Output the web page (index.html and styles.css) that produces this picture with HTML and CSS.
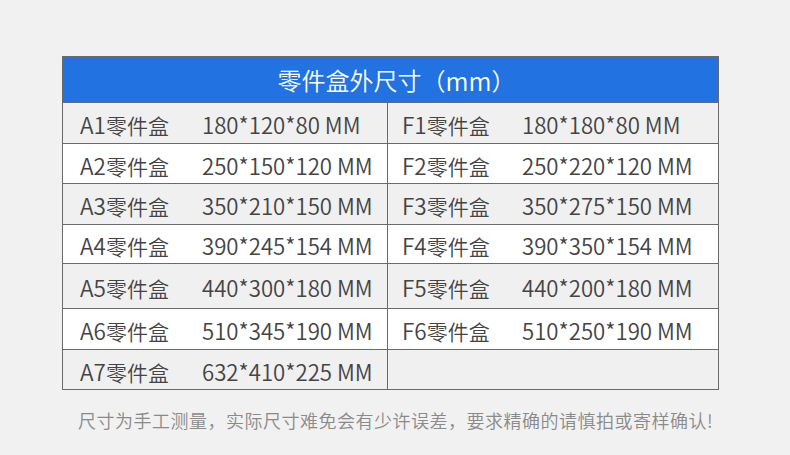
FILE: index.html
```html
<!DOCTYPE html>
<html lang="zh">
<head>
<meta charset="utf-8">
<link rel="stylesheet" href="styles.css">
</head>
<body>
<div class="page">
  <div class="sheet">
    <div class="head">零件盒外尺寸（<span class="lat">mm</span>）</div>
    <div class="row">
      <div class="cell left"><span class="name"><span class="lat">A1</span>零件盒</span><span class="size">180*120*80 MM</span></div>
      <div class="cell right"><span class="name"><span class="lat">F1</span>零件盒</span><span class="size">180*180*80 MM</span></div>
    </div>
    <div class="row">
      <div class="cell left"><span class="name"><span class="lat">A2</span>零件盒</span><span class="size">250*150*120 MM</span></div>
      <div class="cell right"><span class="name"><span class="lat">F2</span>零件盒</span><span class="size">250*220*120 MM</span></div>
    </div>
    <div class="row">
      <div class="cell left"><span class="name"><span class="lat">A3</span>零件盒</span><span class="size">350*210*150 MM</span></div>
      <div class="cell right"><span class="name"><span class="lat">F3</span>零件盒</span><span class="size">350*275*150 MM</span></div>
    </div>
    <div class="row">
      <div class="cell left"><span class="name"><span class="lat">A4</span>零件盒</span><span class="size">390*245*154 MM</span></div>
      <div class="cell right"><span class="name"><span class="lat">F4</span>零件盒</span><span class="size">390*350*154 MM</span></div>
    </div>
    <div class="row">
      <div class="cell left"><span class="name"><span class="lat">A5</span>零件盒</span><span class="size">440*300*180 MM</span></div>
      <div class="cell right"><span class="name"><span class="lat">F5</span>零件盒</span><span class="size">440*200*180 MM</span></div>
    </div>
    <div class="row">
      <div class="cell left"><span class="name"><span class="lat">A6</span>零件盒</span><span class="size">510*345*190 MM</span></div>
      <div class="cell right"><span class="name"><span class="lat">F6</span>零件盒</span><span class="size">510*250*190 MM</span></div>
    </div>
    <div class="row">
      <div class="cell left"><span class="name"><span class="lat">A7</span>零件盒</span><span class="size">632*410*225 MM</span></div>
      <div class="cell right"></div>
    </div>
  </div>
  <p class="note">尺寸为手工测量，实际尺寸难免会有少许误差，要求精确的请慎拍或寄样确认!</p>
</div>
</body>
</html>
```
FILE: styles.css
```css
html, body {
  margin: 0;
  padding: 0;
  background: #f1f1f1;
}
body {
  font-family: "Noto Sans CJK SC", "Noto Sans", sans-serif;
  font-weight: 350;
  width: 790px;
  height: 455px;
  overflow: hidden;
}
.page {
  padding: 56px 0 0 62px;
}
.sheet {
  width: 655px;
  border: 1px solid #6a6a6a;
}
.head {
  height: 45px;
  background: #2273e1;
  color: #fff;
  font-size: 24px;
  display: flex;
  align-items: center;
  justify-content: center;
  border-bottom: 1px solid #6a6a6a;
  padding-left: 12px;
}
.head .lat { font-size: 25px; }
.row {
  display: grid;
  grid-template-columns: 325px 330px;
  height: 40px;
  border-bottom: 1px solid #6a6a6a;
  background: #f0f0f0;
  color: #444;
  font-size: 21px;
}
.row:last-child { border-bottom: none; height: 39px; }
.row:nth-child(3) { height: 39px; background: #fff; }
.row:nth-child(5) { height: 38px; background: #fff; }
.row:nth-child(6) { height: 44px; }
.row:nth-child(7) { background: #fff; }
.cell {
  display: flex;
  align-items: center;
  padding-top: 2px;
  box-sizing: border-box;
}
.left {
  padding-left: 17px;
  border-right: 1px solid #6a6a6a;
}
.right {
  padding-left: 14px;
}
.name {
  display: inline-block;
  width: 122px;
  flex: none;
  white-space: nowrap;
}
.name .lat { font-size: 22.5px; }
.right .name { width: 120px; }
.size {
  white-space: nowrap;
  font-size: 22.2px;
}
.note {
  margin: 17px 0 0 16px;
  font-size: 18px;
  letter-spacing: 0.5px;
  color: #8a8a8a;
}
```
